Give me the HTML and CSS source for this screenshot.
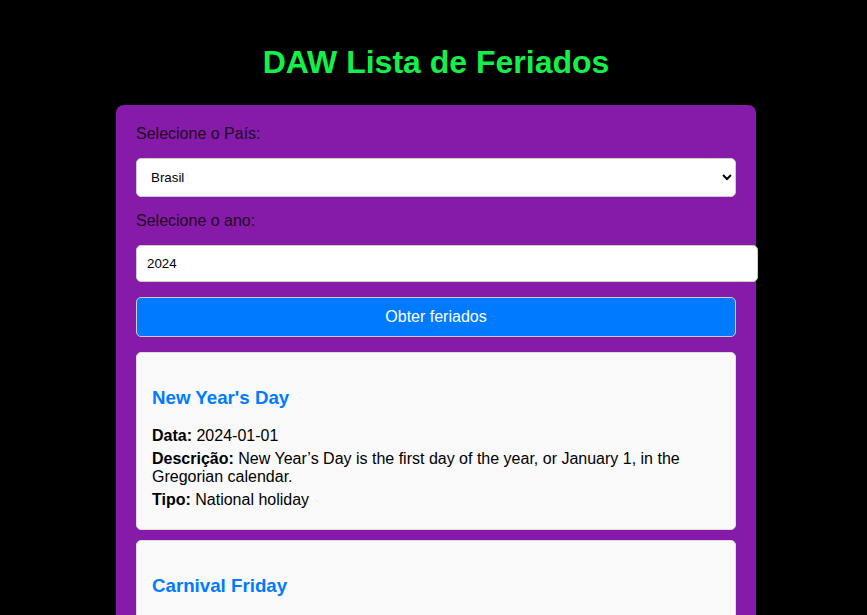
FILE: index.html
```html
<!DOCTYPE html>
<html lang="pt">
<head>
<meta charset="utf-8">
<title>DAW Lista de Feriados</title>
<link rel="stylesheet" href="styles.css">
</head>
<body>
<h1 class="title">DAW Lista de Feriados</h1>
<div class="container">
  <label class="label" for="pais">Selecione o País:</label>
  <select id="pais" class="select">
    <option>Brasil</option>
  </select>
  <label class="label" for="ano">Selecione o ano:</label>
  <input id="ano" class="input" type="text" value="2024">
  <button class="btn">Obter feriados</button>
  <div class="list">
    <div class="card">
      <h3 class="card-title">New Year's Day</h3>
      <p class="row"><strong>Data:</strong> 2024-01-01</p>
      <p class="row"><strong>Descrição:</strong> New Year’s Day is the first day of the year, or January 1, in the Gregorian calendar.</p>
      <p class="row"><strong>Tipo:</strong> National holiday</p>
    </div>
    <div class="card">
      <h3 class="card-title">Carnival Friday</h3>
      <p class="row"><strong>Data:</strong> 2024-02-09</p>
      <p class="row"><strong>Descrição:</strong> Carnival Friday is the Friday before Carnival.</p>
      <p class="row"><strong>Tipo:</strong> Observance</p>
    </div>
  </div>
</div>
</body>
</html>
```
FILE: styles.css
```css
html, body {
  background: #000;
}
body {
  margin: 0;
  padding: 24px 0 40px 5px;
  font-family: "Liberation Sans", Arial, sans-serif;
}
.title {
  margin: 20px 0 24px;
  text-align: center;
  font-size: 32px;
  font-weight: bold;
  color: #14f04a;
}
.container {
  width: 600px;
  margin: 0 auto;
  padding: 20px;
  background: #861ba9;
  border-radius: 8px;
  display: flex;
  flex-direction: column;
  align-items: flex-start;
}
.label {
  font-size: 16px;
  color: #1e0a22;
  line-height: 18px;
  margin-bottom: 15px;
}
.select {
  width: 600px;
  height: 39px;
  padding: 0 10px;
  margin-bottom: 15px;
  border: 1px solid #ccc;
  border-radius: 5px;
  background: #fff;
  font-family: "Liberation Sans", Arial, sans-serif;
  font-size: 13.33px;
  color: #000;
}
.input {
  box-sizing: content-box;
  width: 600px;
  height: 15px;
  padding: 10px;
  margin: 0 0 15px;
  border: 1px solid #ccc;
  border-radius: 5px;
  background: #fff;
  font-family: "Liberation Sans", Arial, sans-serif;
  font-size: 13.33px;
  color: #000;
}
.btn {
  width: 600px;
  height: 40px;
  padding: 0;
  margin-bottom: 15px;
  border: 1px solid #ccc;
  border-radius: 5px;
  background: #007bff;
  color: #fff;
  font-family: "Liberation Sans", Arial, sans-serif;
  font-size: 16px;
}
.list {
  width: 600px;
  display: flex;
  flex-direction: column;
  gap: 10px;
}
.card {
  background: #f9f9f9;
  border: 1px solid #ddd;
  border-radius: 5px;
  padding: 15px;
  color: #000;
}
.card-title {
  margin: 18.72px 0 18.72px;
  font-size: 18.72px;
  line-height: 21.5px;
  color: #007bff;
}
.row {
  margin: 5px 0;
  font-size: 16px;
  line-height: 18px;
}
.card-title + .row {
  margin-top: 0;
}
```
